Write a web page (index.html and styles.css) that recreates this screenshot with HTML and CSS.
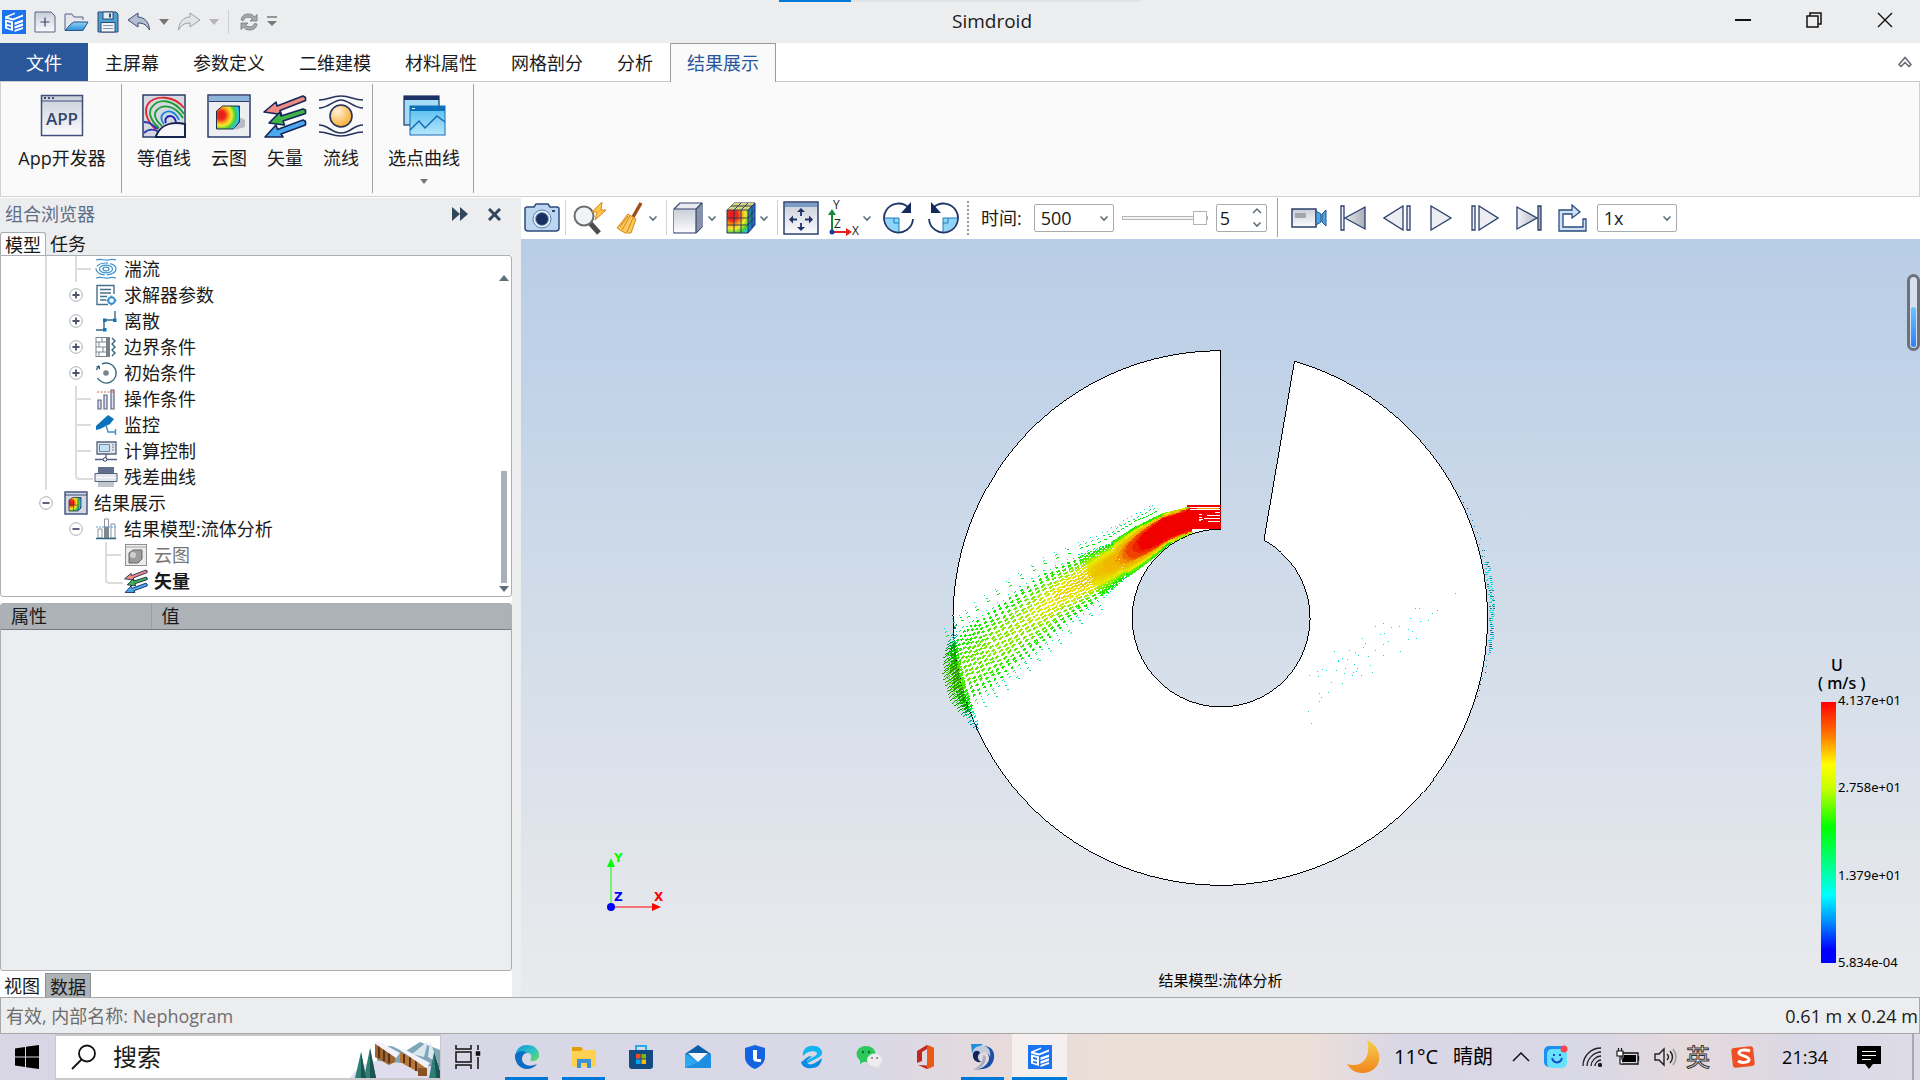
FILE: index.html
```html
<!DOCTYPE html>
<html lang="zh-CN">
<head>
<meta charset="utf-8">
<title>Simdroid</title>
<link rel="stylesheet" href="styles.css">
</head>
<body>
<svg class="defs" width="0" height="0" aria-hidden="true">
  <defs>
    <linearGradient id="gSteel" x1="0" y1="0" x2="0" y2="1"><stop offset="0" stop-color="#c9ced8"/><stop offset="1" stop-color="#fbfbfd"/></linearGradient>
    <linearGradient id="gBlue" x1="0" y1="0" x2="0" y2="1"><stop offset="0" stop-color="#8fd2f7"/><stop offset="1" stop-color="#2d8fd3"/></linearGradient>
    <linearGradient id="gSky" x1="0" y1="0" x2="0" y2="1"><stop offset="0" stop-color="#4fbdf0"/><stop offset="1" stop-color="#b5e6fb"/></linearGradient>
    <radialGradient id="gRain" cx=".2" cy=".4" r=".95"><stop offset="0" stop-color="#e01a1a"/><stop offset=".2" stop-color="#ee2a1a"/><stop offset=".35" stop-color="#f9a01a"/><stop offset=".48" stop-color="#f4ea2a"/><stop offset=".66" stop-color="#3fce3c"/><stop offset=".8" stop-color="#2cc7e8"/><stop offset=".95" stop-color="#1238e0"/></radialGradient>
    <linearGradient id="gGrey" x1="0" y1="0" x2="1" y2="0"><stop offset="0" stop-color="#f4f4f7"/><stop offset="1" stop-color="#a9adb8"/></linearGradient>
    <linearGradient id="gMoon" x1="0" y1="0" x2="0" y2="1"><stop offset="0" stop-color="#f8cf4c"/><stop offset="1" stop-color="#f0861c"/></linearGradient>
    <radialGradient id="gOrb" cx=".35" cy=".3" r=".8"><stop offset="0" stop-color="#fff0d6"/><stop offset="1" stop-color="#f9a61e"/></radialGradient>
    <linearGradient id="gEdge" x1="0" y1="0" x2="1" y2="1"><stop offset="0" stop-color="#1590dc"/><stop offset=".5" stop-color="#2bc1c9"/><stop offset="1" stop-color="#6fe04b"/></linearGradient>
    <symbol id="simLogo" viewBox="0 0 24 24">
      <rect width="24" height="24" fill="#1a73f0"/>
      <path d="M3 6.500 13 2.500v1.500L6 7l5 1.500L21 4.500v2L11 10.500 3 8.500z" fill="#fff"/>
      <path d="M3 9.500l8 2v9.500l-8-2.500zM5 12v2l4 1v-2zM5 16v1.500l4 1.300v-2z" fill="#fff" fill-rule="evenodd"/>
      <path d="M12.500 12.500l8.500-3v2.400l-8.500 3zM12.500 16.300l8.500-3v2.400l-8.500 3zM12.500 20l8.500-3v2l-8.500 3z" fill="#fff"/>
    </symbol>
    <symbol id="vectors" viewBox="0 0 44 44">
      <g stroke="#14265a" stroke-width="1.600" stroke-linejoin="round">
        <path d="M1 18 13 8l1 4L40 2l2.500 1.500v3L17 16.500l1.500 4z" fill="#f08a84"/>
        <path d="M6 29 17 18l1 4 22-7 2.500 1v3.500L20 27l1.500 4z" fill="#3fb548"/>
        <path d="M2 43 13 31l1.500 4.500L40 26l2.500 1.500V31L18 40l2 3z" fill="#4ba8ee"/>
      </g>
    </symbol>
    <symbol id="chev" viewBox="0 0 10 10"><path d="M1.500 3.500 5 7l3.500-3.500" fill="none" stroke="#5b6e7a" stroke-width="1.600"/></symbol>
    <symbol id="tri" viewBox="0 0 10 6"><path d="M0 0h10L5 6z" fill="currentColor"/></symbol>
    <symbol id="plus" viewBox="0 0 14 14"><circle cx="7" cy="7" r="6.300" fill="#fff" stroke="#a9adb5"/><path d="M3.500 7h7M7 3.500v7" stroke="#4c5068" stroke-width="1.800"/></symbol>
    <symbol id="minus" viewBox="0 0 14 14"><circle cx="7" cy="7" r="6.300" fill="#fff" stroke="#a9adb5"/><path d="M3.500 7h7" stroke="#4c5068" stroke-width="1.800"/></symbol>
  </defs>
</svg>

<header class="titlebar">
  <span class="load-track"><span class="load-done"></span></span>
  <div class="quick">
    <svg width="24" height="24"><use href="#simLogo"/></svg>
    <button class="qbtn" aria-label="新建"><svg width="22" height="22" viewBox="0 0 22 22"><path d="M1 1h16l4 4v16H1z" fill="url(#gSteel)" stroke="#566384"/><path d="M6.500 11h9M11 6.500v9" stroke="#3b486e" stroke-width="1.200"/></svg></button>
    <button class="qbtn" aria-label="打开"><svg width="25" height="22" viewBox="0 0 25 22"><path d="M1 19V3h7l2 3h9v3" fill="#e4e7ec" stroke="#566384"/><path d="M1 19.500 7 13l3-2h14l-5 8.500z" fill="url(#gBlue)" stroke="#27548c"/></svg></button>
    <button class="qbtn" aria-label="保存"><svg width="22" height="22" viewBox="0 0 22 22"><path d="M1 1h18l2 2v18H1z" fill="#4d9fce" stroke="#2c4a78"/><path d="M6 1h10v7H6z" fill="#e7edf3" stroke="#2c4a78"/><path d="M12 2.500h2v4h-2z" fill="#2c4a78"/><path d="M4 11.500h14V21H4z" fill="#f0f3f6" stroke="#2c4a78"/><path d="M6 14.500h10M6 17.500h10" stroke="#8793a6"/></svg></button>
    <button class="qbtn" aria-label="撤销"><svg width="24" height="22" viewBox="0 0 24 22"><path d="M1 9 11 2v4c7 .5 11 5 11.500 13C20 14.500 17 12 11 12v4z" fill="#b3bdd2" stroke="#3c4a74" stroke-linejoin="round"/></svg></button>
    <button class="qbtn" aria-label="撤销列表"><svg width="10" height="6"><use href="#tri"/></svg></button>
    <button class="qbtn" aria-label="重做"><svg width="24" height="22" viewBox="0 0 24 22"><path d="M23 9 13 2v4C6 6.500 2 11 1.500 19 4 14.500 7 12 13 12v4z" fill="#e3e4e6" stroke="#9c9fa5" stroke-linejoin="round"/></svg></button>
    <button class="qbtn dim" aria-label="重做列表"><svg width="10" height="6"><use href="#tri"/></svg></button>
    <span class="qsep"></span>
    <button class="qbtn" aria-label="刷新"><svg width="20" height="22" viewBox="0 0 20 22"><path d="M2 9C3 4 6 3 9.500 3c3 0 4.500 1 6 3L18 3.500V10h-7l2.500-2C11 5.500 6 5.500 4.500 9.500zM18 13c-1 5-4 6-7.500 6-3 0-4.500-1-6-3L2 18.500V12h7l-2.500 2c2.500 2.500 7.500 2.500 9-1.500z" fill="#a5a7a9" stroke="#77797c" stroke-width=".8"/></svg></button>
    <button class="qbtn" aria-label="自定义"><svg width="10" height="11" viewBox="0 0 10 11"><path d="M0 1h10" stroke="#777" stroke-width="1.500"/><path d="M0 5h10l-5 5z" fill="#777"/></svg></button>
  </div>
  <h1 class="apptitle">Simdroid</h1>
  <div class="winbtns">
    <button aria-label="最小化"><svg width="16" height="16" viewBox="0 0 16 16"><path d="M0 8h16" stroke="#111" stroke-width="2"/></svg></button>
    <button aria-label="还原"><svg width="16" height="16" viewBox="0 0 16 16" fill="none" stroke="#111" stroke-width="1.500"><path d="M1 4h11v11H1zM4 4V1h11v11h-3"/></svg></button>
    <button aria-label="关闭"><svg width="16" height="16" viewBox="0 0 16 16"><path d="m1 1 14 14M15 1 1 15" stroke="#111" stroke-width="1.400"/></svg></button>
  </div>
</header>

<nav class="tabs">
  <button class="tab file">文件</button>
  <button class="tab">主屏幕</button>
  <button class="tab">参数定义</button>
  <button class="tab">二维建模</button>
  <button class="tab">材料属性</button>
  <button class="tab">网格剖分</button>
  <button class="tab">分析</button>
  <button class="tab active">结果展示</button>
  <button class="fold" aria-label="折叠功能区"><svg width="14" height="12" viewBox="0 0 14 12"><path d="M1 8.500 7 1.500l6 7-2 2-4-4-4 4z" fill="none" stroke="#646a72" stroke-width="1.500"/></svg></button>
</nav>

<section class="ribbon">
  <div class="rgroup app">
    <button class="rbtn"><svg width="44" height="44" viewBox="0 0 44 44"><rect x="1.500" y="1.500" width="41" height="40" fill="url(#gSteel)" stroke="#40507a" stroke-width="1.500"/><path d="M2 7h40" stroke="#40507a"/><path d="M4 4h2M8 4h2M12 4h2" stroke="#40507a" stroke-width="2"/><text x="22" y="31" class="appglyph">APP</text></svg><span>App开发器</span></button>
  </div>
  <div class="rgroup plots">
    <button class="rbtn"><svg width="44" height="44" viewBox="0 0 44 44"><rect x="1" y="1" width="42" height="42" fill="#d6d9e2" stroke="#2c3c6c" stroke-width="1.500"/><g fill="none" stroke-width="1.800"><path d="M14 36C6 28 1 18 6 10 13 1 32 1 42 14" stroke="#e0262c"/><path d="M17 34C8 26 6 18 10 13c7-9 22-8 32 7" stroke="#1c9c35"/><path d="M20 32c-7-6-9-12-5-16 6-6 18-5 26 8" stroke="#1c9c35"/><path d="M22 30c-4-4-3-9 0-11 6-4 12 0 15 7" stroke="#1487d8"/><path d="M24 29c-2-4 1-7 4-7s5 2 6 6" stroke="#2020b8"/><path d="M2 39c5-5 10-4 15-1M2 28c8 0 10 5 14 7" stroke="#2a3cb4"/></g><path d="M14 42c4-10 14-15 29-12v13H14z" fill="#f6f6f8" stroke="#14264e" stroke-width="2"/></svg><span>等值线</span></button>
    <button class="rbtn slim"><svg width="44" height="44" viewBox="0 0 44 44"><rect x="1" y="1" width="42" height="42" fill="#eceef1" stroke="#2c3c6c" stroke-width="1.500"/><path d="M2 2h40v5H2z" fill="#8fb4dc"/><path d="M2 7.500h40" stroke="#2c3c6c"/><path d="M28 36l10-3V26l-6-3z" fill="#b9bcc4"/><path d="M9.500 17l6-5h17v16l-6 7h-17z" fill="url(#gRain)" stroke="#222c4a"/></svg><span>云图</span></button>
    <button class="rbtn slim"><svg width="44" height="44"><use href="#vectors"/></svg><span>矢量</span></button>
    <button class="rbtn slim"><svg width="44" height="44" viewBox="0 0 44 44"><g fill="none" stroke="#24325c" stroke-width="1.600"><path d="M0 6c10 0 12-4 22-4s12 4 22 4M0 14c10 0 14-8 22-8s12 8 22 8M0 31c10 0 12 8 22 8s12-8 22-8M0 38c10 0 12 4 22 4s12-4 22-4"/></g><circle cx="22" cy="22" r="11" fill="url(#gOrb)" stroke="#24325c" stroke-width="1.600"/></svg><span>流线</span></button>
  </div>
  <div class="rgroup curve">
    <button class="rbtn"><svg width="44" height="44" viewBox="0 0 44 44"><rect x="2" y="2" width="35" height="29" fill="#a5dcf5" stroke="#1c3264" stroke-width="1.200"/><path d="M2 2h35v4H2z" fill="#1c3264"/><rect x="8" y="12" width="35" height="29" fill="url(#gSky)" stroke="#146cb4"/><path d="M8 12h35v5H8z" fill="#0d70bc"/><path d="M10 14.500h3" stroke="#fff"/><path d="m8 36 9-9 6 7 12-12 8 6" fill="none" stroke="#146cb4" stroke-width="1.500"/></svg><span>选点曲线</span><svg class="more" width="8" height="5" viewBox="0 0 10 6"><use href="#tri" width="10" height="6"/></svg></button>
  </div>
</section>

<main class="work">
  <aside class="side">
    <div class="sidehead">
      <h2>组合浏览器</h2>
      <button aria-label="展开"><svg width="16" height="14" viewBox="0 0 16 14"><path d="M0 0 8 7 0 14zM8 0l8 7-8 7z" fill="#33475c"/></svg></button>
      <button aria-label="关闭"><svg width="13" height="13" viewBox="0 0 13 13"><path d="m1 1 11 11M12 1 1 12" stroke="#33475c" stroke-width="3"/></svg></button>
    </div>
    <div class="sidetabs"><button class="stab on">模型</button><button class="stab">任务</button></div>
    <div class="dock">
      <div class="treebox">
        <ul class="tree">
          <li><i class="g line"></i><i class="g tee"></i><svg class="ic" viewBox="0 0 24 24" fill="none" stroke="#3c92cc" stroke-width="1.200"><path d="M2 3c6-2 8 1 12 0s5-1 8 0M2 21c6-2 8 1 12 0s5-1 8 0"/><ellipse cx="12" cy="12" rx="10" ry="6" stroke-dasharray="12 2"/><ellipse cx="12" cy="12" rx="6.500" ry="3.800"/><ellipse cx="12" cy="12" rx="3" ry="1.800"/></svg>湍流</li>
          <li><i class="g line"></i><button class="g tog" aria-label="展开"><svg width="14" height="14"><use href="#plus"/></svg></button><svg class="ic" viewBox="0 0 24 24" fill="none" stroke="#477089" stroke-width="1.400"><path d="M20 11V2.500H3v19h11M6 6.500h11M6 10h11M6 13.500h7M6 17h6"/><circle cx="17.500" cy="17.500" r="3.300" stroke="#2f8fd6" stroke-width="2"/><path d="M17.500 12.500v10M12.500 17.500h10" stroke="#2f8fd6" stroke-dasharray="2 6 2 0"/></svg>求解器参数</li>
          <li><i class="g line"></i><button class="g tog" aria-label="展开"><svg width="14" height="14"><use href="#plus"/></svg></button><svg class="ic" viewBox="0 0 24 24"><path d="M2 21h8V11h11V2" fill="none" stroke="#3a6880" stroke-width="1.400"/><path d="M9 9.500h3.500V13H9zM19 9.500h3.500V13H19zM9 19h3.500v3.500H9z" fill="#0a78c8"/></svg>离散</li>
          <li><i class="g line"></i><button class="g tog" aria-label="展开"><svg width="14" height="14"><use href="#plus"/></svg></button><svg class="ic" viewBox="0 0 24 24"><path d="M2 2.500h12M2 7h10M2 12h10M2 17h10M2 21.500h12M2 2v20M8 2v5M5 7v5M9 12v5M5 17v5" fill="none" stroke="#7a858f"/><path d="M12 2h4v20h-4z" fill="#76818b"/><path d="m18 3 3 3-3 3 3 3-3 3 3 3-3 3" fill="none" stroke="#35647c" stroke-width="1.400"/></svg>边界条件</li>
          <li><i class="g line"></i><button class="g tog" aria-label="展开"><svg width="14" height="14"><use href="#plus"/></svg></button><svg class="ic" viewBox="0 0 24 24"><path d="M8 3A10 10 0 1 1 3.500 17M2.500 9C3 7 4 5.500 5 4.500" fill="none" stroke="#3c6a80" stroke-width="1.400"/><path d="M2 5h4v4z" fill="#3c6a80"/><circle cx="12" cy="12" r="2.800" fill="#76818b"/></svg>初始条件</li>
          <li><i class="g line"></i><i class="g tee"></i><svg class="ic" viewBox="0 0 24 24" fill="#e1e4ea" stroke="#5a6686" stroke-width="1.200"><path d="M4 13h3v9H4zM10 8h3v14h-3zM17 3h3v19h-3z"/><path d="M3 5h18" stroke="#d06840" stroke-dasharray="2 1.500"/></svg>操作条件</li>
          <li><i class="g line"></i><i class="g tee"></i><svg class="ic" viewBox="0 0 24 24"><path d="m2 13 12-11 6 4-4 5-10 5-4 1z" fill="#0a72ba"/><path d="m12 12 2 7h7M21.500 16v6" fill="none" stroke="#3f8fc4" stroke-width="1.400"/></svg>监控</li>
          <li><i class="g line"></i><i class="g tee"></i><svg class="ic" viewBox="0 0 24 24"><path d="M3 3h19v12H3z" fill="#e1e5ec" stroke="#55617e" stroke-width="1.300"/><path d="M5.500 5.500h10v7h-10z" fill="#bfe2f5" stroke="#7a86a0"/><path d="M19 5v7" stroke="#55617e" stroke-dasharray="1.500 1"/><path d="M12 15v4M1 20.500h22" stroke="#55617e" stroke-width="1.300"/><circle cx="11" cy="20.500" r="1.800" fill="#fff" stroke="#34446c"/></svg>计算控制</li>
          <li><i class="g line"></i><i class="g elbow"></i><svg class="ic" viewBox="0 0 24 24"><path d="M4 2h16v6H4z" fill="#5f6f8c"/><path d="M1 8.500h22v8H1z" fill="#e4e7ee" stroke="#55617e"/><path d="M2 12.500h20" stroke="#fff" stroke-dasharray="3 1"/><path d="M4 17h16v5H4z" fill="#c1c5cd"/></svg>残差曲线</li>
          <li><button class="g tog" aria-label="收起"><svg width="14" height="14"><use href="#minus"/></svg></button><svg class="ic" viewBox="0 0 24 24"><rect x="1" y="1" width="22" height="22" fill="#d5d8df" stroke="#3c4c80" stroke-width="1.400"/><path d="M1 4h22" stroke="#3c4c80"/><path d="m5 9 4-2.500h8V17l-3 3H5z" fill="url(#gRain)" stroke="#2c3448" stroke-width=".8"/><path d="M14 9v11M14 9l3-2.500M5 14h9M9.500 9v11" stroke="#2c3448" stroke-width=".6"/></svg>结果展示</li>
          <li><i class="g"></i><button class="g tog" aria-label="收起"><svg width="14" height="14"><use href="#minus"/></svg></button><svg class="ic" viewBox="0 0 24 24"><path d="M4 12h4v9H4zM17 7h4v14h-4zM10.500 2h4v8h-4z" fill="#fff" stroke="#8a939c"/><path d="M10 10h5v11h-5z" fill="#7f8992"/><path d="M2 10h20" stroke="#65a0d8" stroke-dasharray="2 1"/><path d="M2 21.500h20" stroke="#2c6880" stroke-width="1.500"/></svg>结果模型:流体分析</li>
          <li class="off"><i class="g"></i><i class="g"></i><i class="g tee"></i><svg class="ic" viewBox="0 0 24 24"><rect x="1.500" y="1.500" width="21" height="21" fill="#ececec" stroke="#909090"/><path d="M2 4h20" stroke="#a5a5a5"/><path d="m5 10 4-3h9v9l-4 4H5z" fill="#9c9c9c" stroke="#666"/><circle cx="9" cy="12" r="3" fill="#cfcfcf"/></svg>云图</li>
          <li class="bold"><i class="g"></i><i class="g"></i><i class="g elbow"></i><svg class="ic"><use href="#vectors"/></svg>矢量</li>
        </ul>
        <div class="sbar"><svg width="10" height="6" viewBox="0 0 10 6"><path d="M0 6h10L5 0z" fill="#5f7078"/></svg><span class="thumb"></span><svg width="10" height="6" viewBox="0 0 10 6"><path d="M0 0h10L5 6z" fill="#5f7078"/></svg></div>
      </div>
      <div class="props">
        <table><thead><tr><th class="k">属性</th><th>值</th></tr></thead></table>
      </div>
      <div class="docktabs"><button>视图</button><button class="sel">数据</button></div>
    </div>
  </aside>

  <section class="stage">
    <div class="bar">
      <button class="tool" aria-label="截图"><svg width="36" height="32" viewBox="0 0 36 32"><path d="M3 5h7l2-3h12l2 3h7q2 0 2 2v19q0 3-3 3H4q-3 0-3-3V7q0-2 2-2z" fill="#bcd7f0" stroke="#2e4a7c" stroke-width="1.500"/><circle cx="18" cy="17" r="9" fill="#eef4fa" stroke="#5d7ba8"/><circle cx="18" cy="17" r="6.500" fill="#16305f" stroke="#7fa4d0"/><path d="M28 9h3" stroke="#2e4a7c" stroke-width="2"/></svg></button>
      <span class="vsep"></span>
      <button class="tool find" aria-label="缩放"><svg width="36" height="34" viewBox="0 0 36 34"><path d="m18 22 9 10" stroke="#4c4c50" stroke-width="5"/><circle cx="12" cy="15" r="9.500" fill="#f1f3f5" stroke="#6a6d72" stroke-width="2"/><path d="M30 1 20 11h5l-2 8 11-10h-5z" fill="#ffc64a" stroke="#dd8416"/></svg></button>
      <button class="tool menu" aria-label="清除"><svg width="32" height="34" viewBox="0 0 32 34"><path d="m20 16 8-14" stroke="#9e4d1c" stroke-width="3.500"/><path d="M15 13 23 18 18 32H12L4 27z" fill="#fbc95d" stroke="#d3861b"/><path d="m17 15-8 14M20 17l-6 14M15 15 7 26" stroke="#d3861b"/></svg><svg class="cv"><use href="#chev"/></svg></button>
      <span class="vsep"></span>
      <button class="tool menu" aria-label="显示"><svg width="32" height="32" viewBox="0 0 32 32"><path d="M2 7 8 1h22v24l-6 6H2z" fill="#e9ebf1" stroke="#33436c" stroke-width="1.200"/><path d="M2 7h21v23H2z" fill="url(#gSteel)"/><path d="M24 7l6-5v23l-6 5z" fill="#8791a8"/><path d="M2 7h22v24M24 7l6-6" fill="none" stroke="#33436c" stroke-width="1.200"/></svg><svg class="cv"><use href="#chev"/></svg></button>
      <button class="tool menu" aria-label="着色"><svg width="32" height="32" viewBox="0 0 32 32"><path d="M3 8 10 1h21v22l-7 8H3z" fill="url(#gRain)" stroke="#24325c"/><path d="M3 8 10 1h21l-7 7z" fill="#d8d67a"/><path d="M24 8l7-7v22l-7 8z" fill="#194fb8" opacity=".6"/><path d="M3 8h21v23M24 8l7-7M10 8v23M17 8v23M3 16h21l7-8M3 23h21l7-8M10 8l7-7M17 8l7-7M7 4h21v22" fill="none" stroke="#24325c" stroke-width=".9"/></svg><svg class="cv"><use href="#chev"/></svg></button>
      <span class="vsep"></span>
      <button class="tool" aria-label="平移"><svg width="36" height="34" viewBox="0 0 36 34"><rect x="1" y="1" width="34" height="32" fill="url(#gSteel)" stroke="#2c3f6e" stroke-width="1.500"/><path d="M2 2h32v4H2z" fill="#7c9cc8"/><path d="M18 8v7M18 22v7M7 18.500h7M22 18.500h7" stroke="#1e3263" stroke-width="1.800"/><path d="m18 7 4 4h-8zM18 30l4-4h-8zM6 18.500l4-4v8zM30 18.500l-4-4v8z" fill="#1e3263"/></svg></button>
      <button class="tool menu" aria-label="视角"><svg class="axes" width="36" height="36" viewBox="0 0 36 36"><path d="M9 32V13" stroke="#118a3a" stroke-width="2"/><path d="m9 9 4 6H5z" fill="#118a3a"/><path d="M9 32h15" stroke="#e3221c" stroke-width="2"/><path d="m29 32-6-4v8z" fill="#e3221c"/><circle cx="9" cy="32" r="2.500" fill="#1b3ca0"/><text x="10" y="9" class="axglyph">Y</text><text x="11" y="28" class="axglyph">Z</text><text x="29" y="35" class="axglyph">X</text></svg><svg class="cv"><use href="#chev"/></svg></button>
      <button class="tool wide" aria-label="顺时针旋转"><svg width="34" height="34" viewBox="0 0 34 34"><path d="M3 17h14v14A14.500 14.500 0 0 1 3 17z" fill="#8fd4f7"/><path d="M3 17h14v14M12 17v5h5" fill="none" stroke="#1b7dc4"/><path d="M31 18A14.500 14.500 0 1 1 27 7" fill="none" stroke="#1e3768" stroke-width="1.800"/><path d="M29 1v11H19z" fill="#132a5c"/></svg></button>
      <button class="tool wide" aria-label="逆时针旋转"><svg width="34" height="34" viewBox="0 0 34 34"><path d="M31 17H17v14A14.500 14.500 0 0 0 31 17z" fill="#8fd4f7"/><path d="M31 17H17v14M22 17v5h-5" fill="none" stroke="#1b7dc4"/><path d="M3 18A14.500 14.500 0 1 0 7 7" fill="none" stroke="#1e3768" stroke-width="1.800"/><path d="M5 1v11h10z" fill="#132a5c"/></svg></button>
      <span class="dots"></span>
      <label class="tlabel" for="time">时间:</label>
      <span class="pick"><select id="time"><option>500</option></select><svg class="cv"><use href="#chev"/></svg></span>
      <input class="slide" type="range" min="0" max="5" value="5" aria-label="时间步">
      <span class="spin"><input type="number" value="5" aria-label="步号"><span class="ud"><svg width="10" height="10" viewBox="0 0 10 10"><path d="M1 7l4-4 4 4" fill="none" stroke="#5b6e7a" stroke-width="1.500"/></svg><svg width="10" height="10"><use href="#chev"/></svg></span></span>
      <span class="tall"></span>
      <button class="tool wide" aria-label="录制"><svg width="36" height="28" viewBox="0 0 36 28"><path d="M1 5h24v18H1z" fill="url(#gSteel)" stroke="#2c3f6e" stroke-width="1.500"/><path d="M4 9h11v5H4z" fill="#a3a6ad"/><path d="M25 7l5 3v8l-5 3zM35 6v16l-4-4v-8z" fill="#4fa4e0" stroke="#22508c"/></svg></button>
      <button class="tool wide" aria-label="首帧"><svg width="28" height="26" viewBox="0 0 28 26"><path d="M2 1h3v24H2zM26 2v22L6 13z" fill="url(#gGrey)" stroke="#2c3f6e" stroke-width="1.300"/></svg></button>
      <button class="tool wide" aria-label="上一帧"><svg width="28" height="26" viewBox="0 0 28 26"><path d="M24 1h3v24h-3zM20 1v24L1 13z" fill="#eceef3" stroke="#2c3f6e" stroke-width="1.300"/></svg></button>
      <button class="tool wide" aria-label="播放"><svg width="24" height="26" viewBox="0 0 24 26"><path d="M2 1v24l20-12z" fill="#eceef3" stroke="#2c3f6e" stroke-width="1.300"/></svg></button>
      <button class="tool wide" aria-label="下一帧"><svg width="28" height="26" viewBox="0 0 28 26"><path d="M1 1h3v24H1zM8 1v24l19-12z" fill="#eceef3" stroke="#2c3f6e" stroke-width="1.300"/></svg></button>
      <button class="tool wide" aria-label="末帧"><svg width="28" height="26" viewBox="0 0 28 26"><path d="M23 1h3v24h-3zM2 2v22l20-11z" fill="url(#gGrey)" stroke="#2c3f6e" stroke-width="1.300"/></svg></button>
      <button class="tool wide" aria-label="循环"><svg width="30" height="28" viewBox="0 0 30 28"><path d="M11 6H1v21h27V15h-3v8H5v-13h9v4l8-6-8-7v5z" fill="#cfe2f4" stroke="#2c4a80" stroke-width="1.300"/></svg></button>
      <span class="pick"><select aria-label="速度"><option>1x</option></select><svg class="cv"><use href="#chev"/></svg></span>
    </div>
    <div class="view">
      <svg class="scene" viewBox="0 0 1400 758">
        <path d="M700 111.500V290A89 89 0 1 0 743.500 301L774 122A267.500 267.500 0 1 1 700 111.500z" fill="#fff" stroke="#000" shape-rendering="crispEdges"/>
        <g id="field" fill="none" shape-rendering="crispEdges"></g>
      </svg>
      <svg class="triad" width="60" height="68" viewBox="0 0 60 68"><path d="M10 54V14" stroke="#0f0"/><path d="m10 6 4 9H6z" fill="#0f0"/><path d="M10 55h42" stroke="#f00"/><path d="M51 51v8l9-4z" fill="#f00"/><circle cx="10" cy="55" r="4" fill="#00f"/><text x="13" y="10" fill="#0f0">Y</text><text x="13" y="49" fill="#00f">Z</text><text x="53" y="49" fill="#f00">X</text></svg>
      <div class="legend">
        <div class="unit"><div class="sym">U</div><div>( m/s )</div></div>
        <div class="scale"><span class="ramp"></span><ol><li>4.137e+01</li><li>2.758e+01</li><li>1.379e+01</li><li>5.834e-04</li></ol></div>
      </div>
      <span class="pill"><span></span></span>
      <p class="caption">结果模型:流体分析</p>
    </div>
  </section>
</main>

<footer class="status"><span>有效, 内部名称: Nephogram</span><span class="dim-size">0.61 m x 0.24 m</span></footer>

<div class="taskbar">
  <button class="start" aria-label="开始"><svg width="24" height="24" viewBox="0 0 24 24"><path d="M0 3.500 10 2v9.500H0zM11 1.800 24 0v11.500H11zM0 12.500h10V22L0 20.500zM11 12.500h13V24l-13-1.800z"/></svg></button>
  <label class="search"><svg width="26" height="26" viewBox="0 0 26 26" fill="none" stroke="#111" stroke-width="1.800"><circle cx="16" cy="9.500" r="8"/><path d="M10.500 15.500 1 25"/></svg><input type="text" placeholder="搜索" aria-label="搜索">
    <svg class="art" width="90" height="38" viewBox="0 0 90 38"><path d="M26 12c10-6 14-8 20-4l8 4L70 2l20 8v28H30z" fill="#7ea5b8"/><path d="M62 14 78 1l-4 16zM80 1l8 22-10-6z" fill="#dce8f0"/><path d="M0 38c8-12 22-20 38-16l30 2 22 4v10z" fill="#dfdcee"/><path d="m25 3 20 11v8l-6 3-14-8z" fill="#a0652f"/><path d="m29 6v12M34 8v13M39 12v11" stroke="#5b3417" stroke-width="2"/><path d="m24 3 4-2 22 12-4 5z" fill="#f3f2fa"/><path d="m50 12 26 13v9l-10-3-16-9z" fill="#b57637"/><path d="M54 14v9M60 17v10M66 20v11" stroke="#5b3417" stroke-width="2"/><path d="m50 10 4-1 26 14-4 5z" fill="#f3f2fa"/><path d="M68 28h9v8h-9z" fill="#8a5122"/><path d="m11 12 5 26H5zM20 8l6 30H14zM84 12l8 26H79z" fill="#2f7f77"/><path d="m20 8 6 30h-6zM11 12l5 26h-5zM84 12l8 26h-6z" fill="#1b5552"/></svg>
  </label>
  <button class="tv" aria-label="任务视图"><svg width="26" height="24" viewBox="0 0 26 24" fill="none" stroke="#111" stroke-width="1.500"><path d="M1 0v4h15V0M1 7h15v10H1zM1 24v-4h15v4M23 0v5M23 12v12"/><path d="M21.500 7h3v3h-3z" fill="#111"/></svg></button>
  <div class="apps">
    <button class="run" aria-label="Edge"><svg width="26" height="26" viewBox="0 0 26 26"><path d="M1 12C2 4 8 1 13 1c8 0 12 5 12 10 0 4-3 6-6 6s-3-2-2-3c1-3-1-5-4-5-6 0-9 4-8 10-3-2-4-5-4-7z" fill="url(#gEdge)"/><path d="M1 12c1-5 8-6 12-3-3 0-5 3-5 6 0 5 6 8 12 6l3-1c-3 4-7 5-10 5C6 25 1 19 1 12z" fill="#0c6dc4"/></svg></button>
    <button class="run" aria-label="文件资源管理器"><svg width="26" height="26" viewBox="0 0 26 26"><path d="M1 3h9l2 3h13v17H1z" fill="#ffd052"/><path d="M1 3h9l2 2-2 2H1z" fill="#e39e0c"/><path d="M6 24V15h14v9h-4v-5h-6v5z" fill="#3c92d4"/></svg></button>
    <button aria-label="应用商店"><svg width="26" height="26" viewBox="0 0 26 26"><path d="M8 7V2h10v5" fill="none" stroke="#2aa9ea" stroke-width="2"/><path d="M1 6h24v16q0 3-3 3H4q-3 0-3-3z" fill="#144a82"/><path d="M8 10h4.500v4.500H8z" fill="#f25022"/><path d="M13.500 10H18v4.500h-4.500z" fill="#7fba00"/><path d="M8 15.500h4.500V20H8z" fill="#00a4ef"/><path d="M13.500 15.500H18V20h-4.500z" fill="#ffb900"/></svg></button>
    <button aria-label="邮件"><svg width="26" height="26" viewBox="0 0 26 26"><path d="M0 10 13 1l13 9v3H0z" fill="#0d5ea8"/><path d="M0 10h26v14H0z" fill="#1e8fe0"/><path d="M3 9h20l-10 9z" fill="#f4f6f8"/><path d="m0 10 13 8-13 6z" fill="#2ea9ee"/></svg></button>
    <button aria-label="安全"><svg width="26" height="26" viewBox="0 0 26 26"><path d="m13 1 10 3v9c0 6-5 10-10 12C8 23 3 19 3 13V4z" fill="#1264e0"/><path d="M11 6h4v9h4v3c-6 0-8-1-8-4z" fill="#fff"/></svg></button>
    <button aria-label="浏览器"><svg width="26" height="26" viewBox="0 0 26 26"><path d="M4 12C3 5 9 1 15 2c6 0 9 5 8 8-2 5-12 6-16 11-1-1-1-2 1-4 3-3 8-4 10-7 1-3-8-5-14 2z" fill="#12b4f2"/><path d="M2 18c3-1 5-6 11-6-3 3-6 4-5 7 3 3 8 1 15-5-1 7-5 10-10 10-5 1-10-1-11-6z" fill="#0a8be4"/></svg></button>
    <button aria-label="微信"><svg width="26" height="26" viewBox="0 0 26 26"><ellipse cx="10" cy="10" rx="9.500" ry="8" fill="#2bc85c"/><path d="m4 16 0 4 5-3z" fill="#2bc85c"/><circle cx="7" cy="8" r="1.200" fill="#156b30"/><circle cx="13" cy="8" r="1.200" fill="#156b30"/><ellipse cx="18.500" cy="16" rx="7.500" ry="6.500" fill="#ededed"/><path d="m22 21 2 3-5-2z" fill="#ededed"/><circle cx="16" cy="14" r="1" fill="#777"/><circle cx="21" cy="14" r="1" fill="#777"/></svg></button>
    <button aria-label="Office"><svg width="26" height="26" viewBox="0 0 26 26"><path d="M4 7 14 1l7 3v18l-7 3-9-4 9 .5V5L9 8v9l-5 2z" fill="#c2261e"/><path d="m14 1 7 3v18l-7 3z" fill="#ea5a16"/></svg></button>
    <button class="run" aria-label="仿真"><svg width="28" height="28" viewBox="0 0 28 28"><path d="M2 1h12L3 10z" fill="#1c8fe0"/><path d="M15 3c7 0 11 5 10 12-1 7-6 11-12 11l-9 1c9-1 15-5 16-11 0-5-2-8-7-9z" fill="#1d4fa8"/><path d="M15 3C7 2 2 7 4 13c1 5 6 7 9 6-3-2-4-7 0-9 4-2 8 1 8 5 1-7-1-11-6-12z" fill="#c3cad8"/><path d="M4 11c-1 5 3 9 8 8-4-2-4-7-1-9-1-3-6-3-7 1z" fill="#12235c"/><path d="M14 12c3 0 4 3 2 7-2 5-7 7-12 8 3-3 10-4 10-15z" fill="#a4afc4"/></svg></button>
    <button class="run cur" aria-label="Simdroid"><svg width="24" height="24"><use href="#simLogo"/></svg></button>
  </div>
  <div class="tray">
    <svg class="moon" width="34" height="34" viewBox="0 0 34 34"><path d="M21 0c19 9 15 33-5 33-7 0-12-4-15-9 15 5 25-8 20-24z" fill="url(#gMoon)"/></svg>
    <span class="wx"><span>11°C</span><span>晴朗</span></span>
    <svg width="18" height="10" viewBox="0 0 18 10"><path d="m1 9 8-8 8 8" fill="none" stroke="#111" stroke-width="1.500"/></svg>
    <svg width="24" height="24" viewBox="0 0 24 24"><rect x="0" y="1" width="22" height="21" rx="5" fill="#1d8ff2"/><rect x="3" y="4" width="20" height="19" rx="5" fill="#67e0fb"/><path d="M8 13c2 6 8 6 10 0M10 9v2M16 9v2" fill="none" stroke="#1746c8" stroke-width="2"/><circle cx="20" cy="4" r="3.500" fill="#f8474c"/></svg>
    <svg width="20" height="20" viewBox="0 0 20 20" fill="none" stroke="#222" stroke-width="1.300"><path d="M1 19C1 9 9 1 19 1M5 19C5 12 12 5 19 5M9 19c0-5 5-10 10-10M13 19c0-3 3-6 6-6"/><circle cx="18" cy="18" r="1.500" fill="#111"/></svg>
    <svg width="24" height="18" viewBox="0 0 24 18"><path d="M6 5h16v11H6zM22.500 8v5" fill="none" stroke="#111" stroke-width="1.300"/><path d="M8 7h12v7H6z"/><path d="M1 3h6v5H1zM2.500 0v3M5.500 0v3M4 8v8h3" fill="#fff" stroke="#111" stroke-width="1.200"/></svg>
    <svg width="23" height="20" viewBox="0 0 23 20" fill="none" stroke="#222" stroke-width="1.400"><path d="M1 7h4l5-5v16l-5-5H1zM13 7q3 3 0 6M16 4q5 6 0 12"/><path d="M19 2q6 8 0 16" stroke="#999"/></svg>
    <span class="ime">英</span>
    <svg class="sogou" width="26" height="24" viewBox="0 0 26 24"><rect x="1" y="2" width="22" height="20" rx="3" fill="#ee4f24" transform="rotate(-6 12 12)"/><path d="M19 6c-5-2-11-1-11 2s11 3 10 7c-1 3-8 3-11 1" fill="none" stroke="#fff" stroke-width="3"/></svg>
    <span class="clock">21:34</span>
    <svg width="24" height="24" viewBox="0 0 24 24"><path d="M0 1h24v18h-8l-4 5-4-5H0z"/><path d="M5 6.500h14M5 10.500h14M5 14.500h9" stroke="#fff" stroke-width="1.200"/></svg>
    <span class="desk"></span>
  </div>
</div>
<script src="field.js"></script>
</body>
</html>
```
FILE: styles.css
```css
* { box-sizing: border-box; }
body {
  margin: 0;
  height: 100vh;
  display: flex;
  flex-direction: column;
  overflow: hidden;
  background: #fff;
  color: #1a1a1a;
  font: 18px/24px "Open Sans", "Noto Sans CJK SC", sans-serif;
}
button {
  border: 0;
  padding: 0;
  margin: 0;
  background: none;
  color: inherit;
  font: inherit;
}
svg { flex: none; }
.defs { position: absolute; }
h1, h2, p, ul, ol { margin: 0; padding: 0; font-weight: 400; list-style: none; }

.titlebar {
  position: relative;
  flex: none;
  height: 43px;
  display: flex;
  background: #ecedef;
}
.load-track {
  position: absolute;
  left: 779px;
  top: 0;
  width: 362px;
  height: 2px;
  background: #e2e3e5;
}
.load-done { display: block; width: 72px; height: 2px; background: #0078d7; }
.quick {
  width: 277px;
  padding-left: 2px;
  display: flex;
  align-items: center;
  gap: 8px;
}
.qbtn { display: flex; color: #777; }
.dim { color: #b5b5b7; }
.qsep { width: 1px; height: 24px; margin: 0 2px 0 1px; background: #cfcfd1; }
.apptitle { flex: 1; text-align: center; font-size: 19px; line-height: 43px; }
.winbtns { display: flex; padding-bottom: 3px; }
.winbtns button { width: 71px; display: flex; align-items: center; justify-content: center; }

.tabs {
  flex: none;
  height: 39px;
  display: flex;
  border-bottom: 1px solid #c9cacc;
}
.tab { padding: 1px 17px 0; }
.file { padding: 1px 26px 0; background: #2a579a; color: #fff; }
.active {
  margin-bottom: -1px;
  padding: 0 16px;
  border: 1px solid #9a9ca0;
  border-bottom: 0;
  background: #fafafa;
  color: #2a579a;
}
.fold { margin-left: auto; padding: 0 8px 2px 0; }

.ribbon {
  flex: none;
  height: 115px;
  padding: 2px 0 3px;
  display: flex;
  background: #fafafa;
  border: 1px solid #d0d1d3;
  border-top: 0;
}
.rgroup { display: flex; border-right: 1px solid #a0a2a5; }
.rbtn {
  display: flex;
  flex-direction: column;
  align-items: center;
  padding: 10px 10px 0;
}
.rbtn span { margin-top: 8px; }
.slim { padding: 10px 6px 0; }
.app { width: 121px; padding-left: 2px; justify-content: center; }
.plots { padding: 0 3px 0 5px; }
.curve .rbtn { padding: 10px 13px 0 15px; }
.more { margin-top: 9px; color: #777; }
.appglyph { font: 600 17px "Open Sans", sans-serif; fill: #34476e; text-anchor: middle; }

.work { flex: 1; min-height: 0; display: flex; padding-top: 1px; }
.side {
  flex: none;
  width: 521px;
  padding-right: 9px;
  display: flex;
  flex-direction: column;
  background: #ecedef;
}
.sidehead { display: flex; align-items: center; height: 34px; padding: 0 11px 2px 5px; gap: 20px; }
.sidehead h2 { flex: 1; font-size: 18px; color: #5f6e86; }
.sidehead button { display: flex; }
.sidetabs { display: flex; height: 23px; }
.stab { padding: 1px 4px 0; line-height: 22px; }
.stab.on { background: #fff; border: 1px solid #a8abb0; border-bottom: 0; border-radius: 3px 3px 0 0; }
.dock { flex: 1; min-height: 0; display: flex; flex-direction: column; background: #fff; }
.treebox {
  display: flex;
  border: 1px solid #aab0b5;
  border-radius: 0 3px 3px 3px;
}
.tree { flex: 1; padding: 0 0 2px 30px; }
.tree li { display: flex; align-items: center; height: 26px; }
.off { color: #777; }
.bold { font-weight: 700; }
.g { flex: none; width: 30px; height: 26px; }
.line { background: linear-gradient(#dcdcdc, #dcdcdc) 14px 0 / 2px 26px no-repeat; }
.tee {
  background:
    linear-gradient(#dcdcdc, #dcdcdc) 14px 0 / 2px 26px no-repeat,
    linear-gradient(#dcdcdc, #dcdcdc) 14px 12px / 16px 2px no-repeat;
}
.elbow { display: block; }
.elbow::before {
  content: "";
  display: block;
  width: 16px;
  height: 14px;
  margin-left: 14px;
  border: solid #dcdcdc;
  border-width: 0 0 2px 2px;
  border-bottom-left-radius: 4px;
}
.tog { display: flex; align-items: center; justify-content: center; }
.ic { width: 24px; height: 24px; margin: 0 6px 0 3px; }
.sbar {
  width: 14px;
  padding: 19px 0 4px;
  display: flex;
  flex-direction: column;
  align-items: center;
}
.thumb { width: 6px; height: 112px; margin: auto 0 3px; background: #aab0b5; }
.props {
  flex: 1;
  min-height: 0;
  margin-top: 6px;
  border: 1px solid #aab0b5;
  border-radius: 3px;
  background: #ecedef;
}
.props table { width: 100%; border-collapse: collapse; background: #acb2b6; }
.props th {
  height: 25px;
  padding: 0 10px;
  text-align: left;
  font-weight: 400;
  border-bottom: 1px solid #757b80;
}
.props .k { width: 150px; border-right: 1px solid #989ea2; }
.docktabs { flex: none; display: flex; height: 26px; padding-top: 2px; }
.docktabs button { padding: 1px 4px 0; }
.docktabs .sel { margin-left: 1px; border: 1px solid #8a9095; border-bottom: 0; background: #acb2b6; }

.stage { flex: 1; min-width: 0; display: flex; flex-direction: column; }
.bar { flex: none; height: 41px; padding: 0 0 2px 3px; display: flex; align-items: center; gap: 4px; }
.tool { display: flex; align-items: center; justify-content: center; min-width: 36px; }
.find { width: 38px; }
.wide { width: 40px; }
.cv { width: 10px; height: 10px; margin: 0 3px; }
.vsep { width: 1px; height: 35px; margin: 0 1px; background: #d0d1d3; }
.dots { height: 34px; border-left: 2px dotted #999; }
.tlabel { margin-left: 8px; margin-right: 8px; }
.pick { display: grid; width: 80px; height: 28px; align-items: center; }
.pick select {
  grid-area: 1 / 1;
  width: 80px;
  height: 28px;
  padding: 0 6px;
  appearance: none;
  border: 1px solid #a8abae;
  border-radius: 2px;
  background: #fff;
  color: inherit;
  font: inherit;
}
.pick .cv { grid-area: 1 / 1; justify-self: end; margin-right: 5px; }
.slide { appearance: none; width: 86px; height: 16px; margin: 0 4px; background: none; }
.slide::-webkit-slider-runnable-track { height: 4px; border: 1px solid #b4b6b8; background: #f2f2f2; }
.slide::-webkit-slider-thumb {
  appearance: none;
  width: 14px;
  height: 14px;
  margin-top: -6px;
  border: 1px solid #b4b6b8;
  background: #fff;
}
.spin {
  width: 51px;
  height: 28px;
  display: flex;
  align-items: center;
  border: 1px solid #a8abae;
  border-radius: 2px;
}
.spin input {
  flex: 1;
  min-width: 0;
  padding: 0 3px;
  border: 0;
  background: none;
  color: inherit;
  font: inherit;
  appearance: textfield;
}
.spin input::-webkit-inner-spin-button { display: none; }
.ud { display: flex; flex-direction: column; gap: 3px; margin-right: 4px; }
.tall { align-self: stretch; width: 1px; margin: 0 7px 0 6px; background: #a0a2a5; }
.axes { overflow: visible; }
.axglyph { font: 12px "Open Sans", sans-serif; fill: #222; }

.view {
  position: relative;
  flex: 1;
  min-height: 0;
  background: linear-gradient(#b8cde6, #c2d3e8 20%, #cfdbe8 45%, #dce2eb 70%, #e9eaec);
}
.scene { display: block; width: 100%; height: 100%; }
.triad { position: absolute; left: 80px; bottom: 77px; overflow: visible; font: 700 12px "DejaVu Sans", sans-serif; }
.legend { position: absolute; right: 0; bottom: 27px; width: 104px; font-family: "Noto Sans", sans-serif; }
.unit {
  margin-left: 2px;
  font-size: 16px;
  font-weight: 500;
  line-height: 18px;
  color: #000;
}
.sym { width: 38px; text-align: center; }
.scale { display: flex; height: 278px; margin-left: 5px; gap: 2px; }
.ramp {
  width: 15px;
  height: 261px;
  margin-top: 10px;
  background: linear-gradient(#f00, #ff7000 12%, #ff0 24%, #c8ff00 33%, #0f0 48%, #00ff70 60%, #0ff 74%, #0090ff 84%, #00f 95%);
}
.scale ol { display: flex; flex-direction: column; justify-content: space-between; font-size: 13px; line-height: 16px; color: #000; }
.pill {
  position: absolute;
  right: 0;
  top: 35px;
  width: 13px;
  height: 77px;
  padding: 30px 1px 1px;
  border: 3px solid #6b727b;
  border-radius: 7px;
  background: #d6e0ee;
}
.pill span { display: block; height: 40px; border-radius: 3px; background: linear-gradient(#6cc4ff, #2f7dfa); }
.caption {
  position: absolute;
  left: 0;
  right: 0;
  bottom: 7px;
  text-align: center;
  font-size: 15px;
  line-height: 20px;
  color: #000;
}

.status {
  flex: none;
  height: 37px;
  padding: 0 1px 0 5px;
  display: flex;
  align-items: center;
  justify-content: space-between;
  border: 1px solid #a8a8a8;
  background: #ecedef;
  color: #6e6e6e;
}
.dim-size { color: #1a1a1a; }

.taskbar {
  flex: none;
  height: 46px;
  display: flex;
  background: linear-gradient(90deg, #d8d6e4 0, #d8d8e6 45%, #e6dadc 52%, #ecdfd8 58%, #ecdfd8 68%, #d9d7e5 73%, #d9d8e5 83%, #e6d9dc 88%, #d9d8e5 94%, #dcdbe6 100%);
}
.start { width: 55px; padding-right: 1px; display: flex; align-items: center; justify-content: center; }
.search {
  width: 386px;
  padding-left: 15px;
  display: flex;
  align-items: center;
  gap: 16px;
  border: 1px solid #c9c8cc;
  border-width: 2px 1px;
  background: #fff;
}
.search input {
  flex: 1;
  min-width: 0;
  padding: 0;
  border: 0;
  outline: 0;
  background: none;
  font: 24px/36px "Open Sans", "Noto Sans CJK SC", sans-serif;
}
.search input::placeholder { color: #1a1a1a; opacity: 1; }
.art { align-self: flex-end; }
.tv { width: 58px; padding-right: 4px; display: flex; align-items: center; justify-content: center; }
.apps { display: flex; gap: 2px; }
.apps button {
  width: 55px;
  padding-top: 3px;
  display: flex;
  align-items: center;
  justify-content: center;
  border-bottom: 3px solid transparent;
}
.apps .run { border-image: linear-gradient(90deg, transparent 6px, #0078d7 6px 49px, transparent 49px) 0 0 3 0; }
.apps .cur { background: #f5f0ef; border-image: none; border-bottom-color: #0078d7; }
.tray { margin-left: auto; display: flex; align-items: center; gap: 14px; color: #000; }
.wx { display: flex; gap: 15px; font-size: 20px; margin-right: 5px; }
.ime {
  margin-left: -5px;
  font-size: 24px;
  color: #fff;
  -webkit-text-stroke: 1px #333;
}
.sogou { margin-left: 7px; }
.clock { margin: 0 15px 0 11px; }
.desk { width: 23px; height: 46px; border-right: 2px solid #a9a8b4; margin-right: 6px; margin-left: -4px; }
```
FILE: field.js
```js
// Draws the velocity vectors over the flow model.
(function () {
  var group = document.getElementById('field');
  var buckets = {};
  var seed = 7;
  function rnd() {
    seed = (seed * 16807) % 2147483647;
    return seed / 2147483647;
  }
  var stops = [
    [0, 0, 0, 220], [0.15, 0, 120, 230], [0.3, 0, 225, 225], [0.36, 0, 230, 130],
    [0.4, 0, 235, 0], [0.5, 40, 235, 0], [0.62, 150, 236, 0], [0.7, 232, 232, 0],
    [0.84, 240, 180, 0], [0.93, 240, 70, 0], [1, 240, 0, 0]
  ];
  function color(s, shade) {
    s = Math.max(0, Math.min(1, Math.round(s * 30) / 30));
    for (var i = 1; i < stops.length; i++) {
      if (s <= stops[i][0]) {
        var a = stops[i - 1], b = stops[i], t = (s - a[0]) / (b[0] - a[0]);
        return 'rgb(' + [1, 2, 3].map(function (k) {
          return Math.round((a[k] + (b[k] - a[k]) * t) * shade);
        }).join(',') + ')';
      }
    }
  }
  function dash(x, y, dx, dy, s, w, shade) {
    var key = color(s, shade || 1) + '|' + w;
    buckets[key] = (buckets[key] || '') +
      'M' + x.toFixed(1) + ' ' + y.toFixed(1) + 'l' + dx.toFixed(1) + ' ' + dy.toFixed(1);
  }

  // Jet cross-sections: upper x, y, lower x, y, peak speed, edge falloff power.
  var jet = [
    [700, 267, 700, 290, 1, 12], [669, 268, 672, 293, 1.05, 9], [642, 275, 651, 303, 1.08, 5],
    [617, 287, 632, 319, 1.02, 3], [592, 303, 609, 336, 0.86, 2.6], [559, 315, 584, 358, 0.77, 2],
    [524, 331, 553, 382, 0.72, 1.8], [488, 355, 522, 410, 0.64, 2], [456, 378, 490, 438, 0.59, 2.2],
    [436, 392, 457, 464, 0.57, 2.2], [426, 408, 446, 474, 0.5, 2.4]
  ];
  for (var i = 1; i < jet.length - 1; i++) {
    var cols = i < 4 ? 12 : i === 4 ? 11 : i > 8 ? 2 : 6;
    var rows = i < 4 ? 18 : 17;
    var ax = (jet[i + 1][0] + jet[i + 1][2]) - (jet[i][0] + jet[i][2]);
    var ay = (jet[i + 1][1] + jet[i + 1][3]) - (jet[i][1] + jet[i][3]);
    var n = Math.hypot(ax, ay);
    for (var c = 0; c < cols; c++) {
      var p = jet[i].map(function (v, k) { return v + (jet[i + 1][k] - v) * c / cols; });
      for (var r = 0; r <= rows; r++) {
        var v = Math.min(1, Math.max(0, (r + (c % 2) / 2 + (rnd() - 0.5) * 0.3) / rows));
        var edge = Math.abs(2 * v - 1);
        var s = p[4] - Math.pow(edge, p[5]) * (p[4] - (i < 2 ? 0.6 : i < 4 ? 0.5 : 0.33));
        var x = p[0] + (p[2] - p[0]) * v, y = p[1] + (p[3] - p[1]) * v;
        var len = i < 4 ? 5 : Math.max(1, (s - 0.2) * 12);
        dash(x, y, ax / n * len, ay / n * len, s, s > 0.39 ? 2 : 1);
      }
      // Slow fringe above and below the jet.
      if (i > 1 && c % 2) {
        for (var e2 = 1; e2 < 4; e2++) {
          dash(p[0] - e2 * 2 - 1, p[1] - e2 * 3 - rnd() * 2, -(4 - e2), 1, 0.46 - e2 * 0.05, 1);
          if (i > 4 && e2 < 3) dash(p[2] + e2 * 2, p[3] + e2 * 3 + rnd() * 2, -2, 1, 0.4 - e2 * 0.04, 1);
        }
      }
    }
  }

  // Inlet: long horizontal vectors with gaps between the layers.
  for (var h = 266; h <= 289; h += 1) {
    var y0 = h + 0.5;
    if (h === 266 || h === 267 || h === 271 || h > 284) {
      dash(700, y0, -34, 0, 1, 1);
    } else if (h !== 268 && h !== 270) {
      var gap = 3 + rnd() * 14;
      dash(700 - (h % 3 === 0 ? gap : 0), y0, -(34 - gap), 0, 1, 1);
      dash(678, y0, -10, 0, 1, 1);
    }
  }
  dash(698, 269.5, -22, 0, 0.86, 1);

  // Vectors that leave the ring at the left wall.
  for (var q = 382; q < 490; q += 3) {
    var wall = 700 - Math.sqrt(267.5 * 267.5 - (q - 379) * (q - 379));
    var k = Math.sin((q - 380) / 112 * Math.PI);
    for (var m = 0; m < 4; m++) {
      var sx = wall + 5 - m * 4 * k - rnd() * 2;
      var sp = 0.14 + 0.4 * k;
      if (k < 0.5 && rnd() < 0.5) continue;
      dash(sx, q + m, -(1 + 6 * k), 1 + 4 * k, sp, k > 0.6 && m < 2 ? 2 : 1, m % 2 ? 0.65 : 1);
    }
  }

  // Weak recirculation along the right wall.
  for (var z = 258; z < 460; z += z > 320 && z < 415 ? 2 : 6) {
    var w2 = 700 + Math.sqrt(267.5 * 267.5 - (z - 379) * (z - 379));
    var f = Math.sin((z - 256) / 206 * Math.PI);
    var count = Math.ceil(f * f * 2);
    for (var d = 0; d < count; d++) {
      dash(w2 + 1 + rnd() * 5 * f, z, z > 320 && z < 415 ? 2 : 1, -1, 0.08 + 0.22 * f, 1, rnd() < 0.4 ? 0.6 : 1);
    }
  }

  // Isolated slow vectors downstream, x and y in model space.
  var dots = [935,354,895,369,899,369,917,371,912,374,908,381,900,382,890,379,863,384,855,387,
    871,388,879,387,888,390,892,392,860,395,864,394,842,399,896,399,888,400,868,402,845,404,
    863,405,843,408,814,412,829,411,835,413,855,411,880,412,838,416,848,417,827,420,822,419,
    863,416,818,422,834,425,850,426,818,421,825,429,837,429,802,430,797,432,806,431,816,431,
    824,434,833,433,836,432,852,433,789,436,798,437,832,436,841,436,811,443,822,444,808,453,
    799,454,801,458,799,462,788,472,791,484];
  for (var e = 0; e < dots.length; e += 2) dash(dots[e], dots[e + 1] + 0.5, 1, 0, 0.3, 1);

  Object.keys(buckets).forEach(function (key) {
    var parts = key.split('|');
    var path = document.createElementNS('http://www.w3.org/2000/svg', 'path');
    path.setAttribute('d', buckets[key]);
    path.setAttribute('stroke', parts[0]);
    path.setAttribute('stroke-width', parts[1]);
    group.appendChild(path);
  });
})();
```
